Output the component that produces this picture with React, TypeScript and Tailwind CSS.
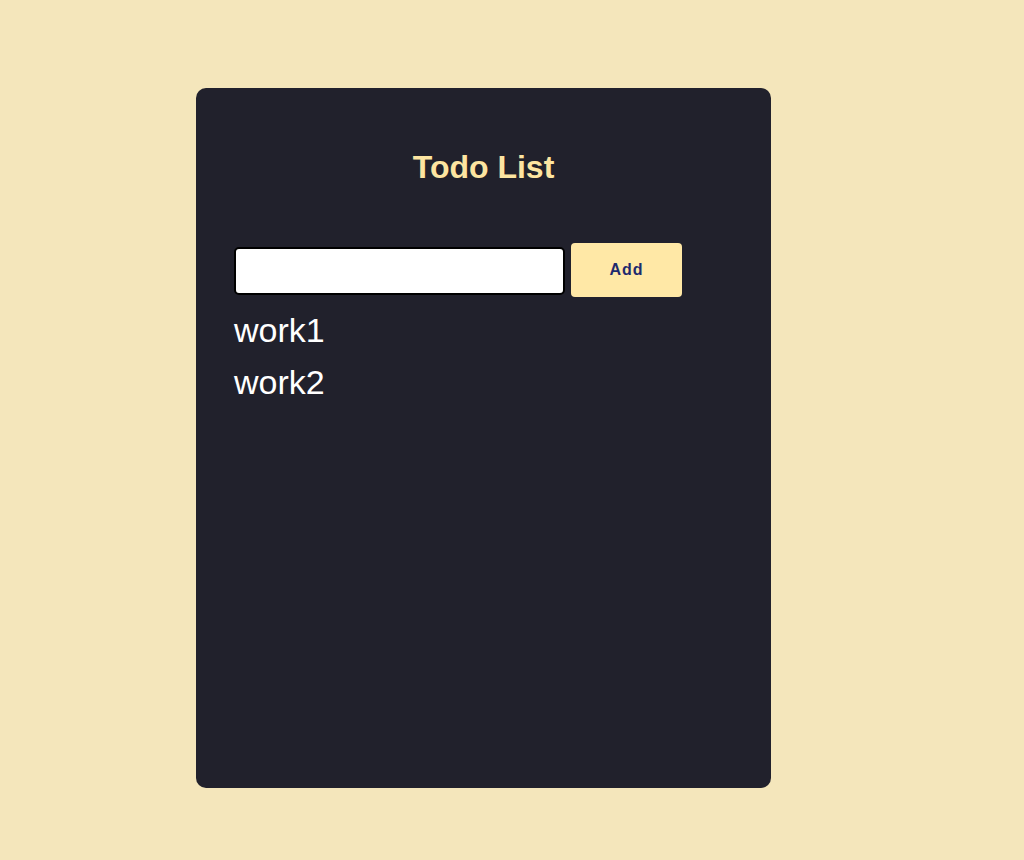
import * as React from "react";

export default function App() {
  const [text, setText] = React.useState("");
  const [todos, setTodos] = React.useState<string[]>(["work1", "work2"]);

  const add = () => {
    if (!text.trim()) return;
    setTodos([...todos, text.trim()]);
    setText("");
  };

  return (
    <div className="min-h-[860px] bg-[#f4e6bb] pt-[88px] pl-[196px] font-['Liberation_Sans',Arial,sans-serif]">
      <div className="h-[700px] w-[575px] rounded-[10px] bg-[#21212c] px-[38px] pt-[60px]">
        <h1 className="text-center text-[32px] font-bold leading-[38px] text-[#fde5a1]">
          Todo List
        </h1>
        <div className="mt-[57px] flex items-center gap-[6px]">
          <input
            value={text}
            onChange={(e) => setText(e.target.value)}
            className="mt-[1px] h-[48px] w-[331px] rounded-[5px] border-2 border-black bg-white px-2 text-[16px] outline-none"
          />
          <button
            onClick={add}
            className="h-[54px] w-[111px] rounded-[4px] bg-[#ffe8a6] text-[16px] font-bold tracking-[1px] text-[#1e2a6e]"
          >
            Add
          </button>
        </div>
        <ul className="mt-[7px]">
          {todos.map((t, i) => (
            <li key={i} className="text-[34px] leading-[52px] text-white">
              {t}
            </li>
          ))}
        </ul>
      </div>
    </div>
  );
}
